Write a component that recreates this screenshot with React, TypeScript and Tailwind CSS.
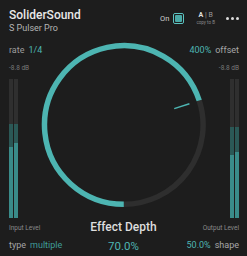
import React from 'react';

const TEAL = '#4db5b2';

const Bar = ({ track, dim }: { track: number; dim: number }) => (
  <div className="flex flex-col w-[4px] h-[139px]">
    <div className="bg-[#2f2f2f]" style={{ height: track }} />
    <div className="bg-[#2b5856]" style={{ height: dim }} />
    <div className="flex-1 bg-[#3a8b89]" />
  </div>
);

const Meter = ({ bars }: { bars: [number, number][] }) => (
  <div className="flex gap-[1px] mt-[7px]">
    {bars.map(([t, d], i) => (
      <Bar key={i} track={t} dim={d} />
    ))}
  </div>
);

const Knob = () => {
  const cx = 83.8;
  const cy = 85;
  const r = 79.3;
  const a = (342 * Math.PI) / 180;
  const ex = cx + r * Math.cos(a);
  const ey = cy + r * Math.sin(a);
  const p = (rad: number) => [cx + rad * Math.cos(a), cy + rad * Math.sin(a)];
  const [x1, y1] = p(53);
  const [x2, y2] = p(69);
  return (
    <svg width="167" height="170" viewBox="0 0 167 170" className="block">
      <path
        d={`M ${ex} ${ey} A ${r} ${r} 0 0 1 ${cx} ${cy + r}`}
        fill="none"
        stroke="#2e2e2e"
        strokeWidth="5.5"
      />
      <path
        d={`M ${cx} ${cy + r} A ${r} ${r} 0 1 1 ${ex} ${ey}`}
        fill="none"
        stroke={TEAL}
        strokeWidth="5.5"
      />
      <line x1={x1} y1={y1} x2={x2} y2={y2} stroke={TEAL} strokeWidth="1.5" />
    </svg>
  );
};

export default function App() {
  return (
    <div className="w-[247px] h-[256px] bg-[#1d1d1d] overflow-hidden font-['Roboto',sans-serif] flex flex-col">
      <header className="h-[40px] flex justify-between items-start pl-[9px] pr-[8px] pt-[8px]">
        <div>
          <div className="text-[12px] leading-[14px] font-medium text-[#e8e8e8]">SoliderSound</div>
          <div className="text-[9px] leading-[11px] mt-[1px] text-[#b4b4b4]">S Pulser Pro</div>
        </div>
        <div className="flex items-center h-[11px] mt-[5px]">
          <span className="text-[7.5px] text-[#cfcfcf]">On</span>
          <div className="ml-[4px] w-[11px] h-[11px] rounded-[2px] border border-[#5cc4c1] p-[1px]">
            <div className="w-full h-full rounded-[1px] bg-[#4aa9a6] ring-1 ring-[#1d1d1d]" />
          </div>
          <div className="ml-[12px] flex flex-col items-center">
            <div className="text-[7px] leading-[8px] text-[#9a9a9a]">
              <span className="font-bold text-[#e0e0e0]">A</span> | B
            </div>
            <div className="text-[4.5px] leading-[6px] text-[#8a8a8a] mt-[1px]">copy to B</div>
          </div>
          <div className="ml-[11px] flex gap-[2px]">
            <span className="w-[3px] h-[3px] rounded-full bg-[#dcdcdc]" />
            <span className="w-[3px] h-[3px] rounded-full bg-[#dcdcdc]" />
            <span className="w-[3px] h-[3px] rounded-full bg-[#dcdcdc]" />
          </div>
        </div>
      </header>
      <main className="flex flex-1">
        <section className="w-[40px] pl-[9px] flex flex-col items-start">
          <div className="mt-[5px] text-[9px] leading-[11px] whitespace-nowrap">
            <span className="text-[#9c9c9c]">rate</span>
            <span className="ml-[4px] text-[#4db5b2]">1/4</span>
          </div>
          <div className="mt-[8px] text-[6.5px] leading-[8px] text-[#7a7a7a] whitespace-nowrap">-8.8 dB</div>
          <Meter bars={[[45, 23], [45, 19]]} />
          <div className="mt-[6px] text-[6.5px] leading-[8px] text-[#8a8a8a] whitespace-nowrap">Input Level</div>
          <div className="mt-[8px] text-[9px] leading-[11px] whitespace-nowrap">
            <span className="text-[#a4a4a4]">type</span>
            <span className="ml-[4px] text-[#3f9d9a]">multiple</span>
          </div>
        </section>
        <section className="flex-1 flex flex-col items-center">
          <Knob />
          <div className="mt-[10px] text-[12px] leading-[14px] font-medium text-[#dedede]">Effect Depth</div>
          <div className="mt-[6px] text-[11.5px] leading-[13px] text-[#4db5b2]">70.0%</div>
        </section>
        <section className="w-[40px] pr-[8px] flex flex-col items-end">
          <div className="mt-[5px] flex justify-end w-full text-[9px] leading-[11px] whitespace-nowrap">
            <span className="text-[#4db5b2]">400%</span>
            <span className="ml-[4px] text-[#a8a8a8]">offset</span>
          </div>
          <div className="mt-[8px] text-[6.5px] leading-[8px] text-[#7a7a7a] whitespace-nowrap">-8.8 dB</div>
          <Meter bars={[[48, 28], [48, 25]]} />
          <div className="mt-[6px] flex justify-end w-full text-[6.5px] leading-[8px] text-[#8a8a8a] whitespace-nowrap">
            Output Level
          </div>
          <div className="mt-[8px] flex justify-end w-full text-[9px] leading-[11px] whitespace-nowrap">
            <span className="text-[#4db5b2]">50.0%</span>
            <span className="ml-[4px] text-[#a8a8a8]">shape</span>
          </div>
        </section>
      </main>
    </div>
  );
}
